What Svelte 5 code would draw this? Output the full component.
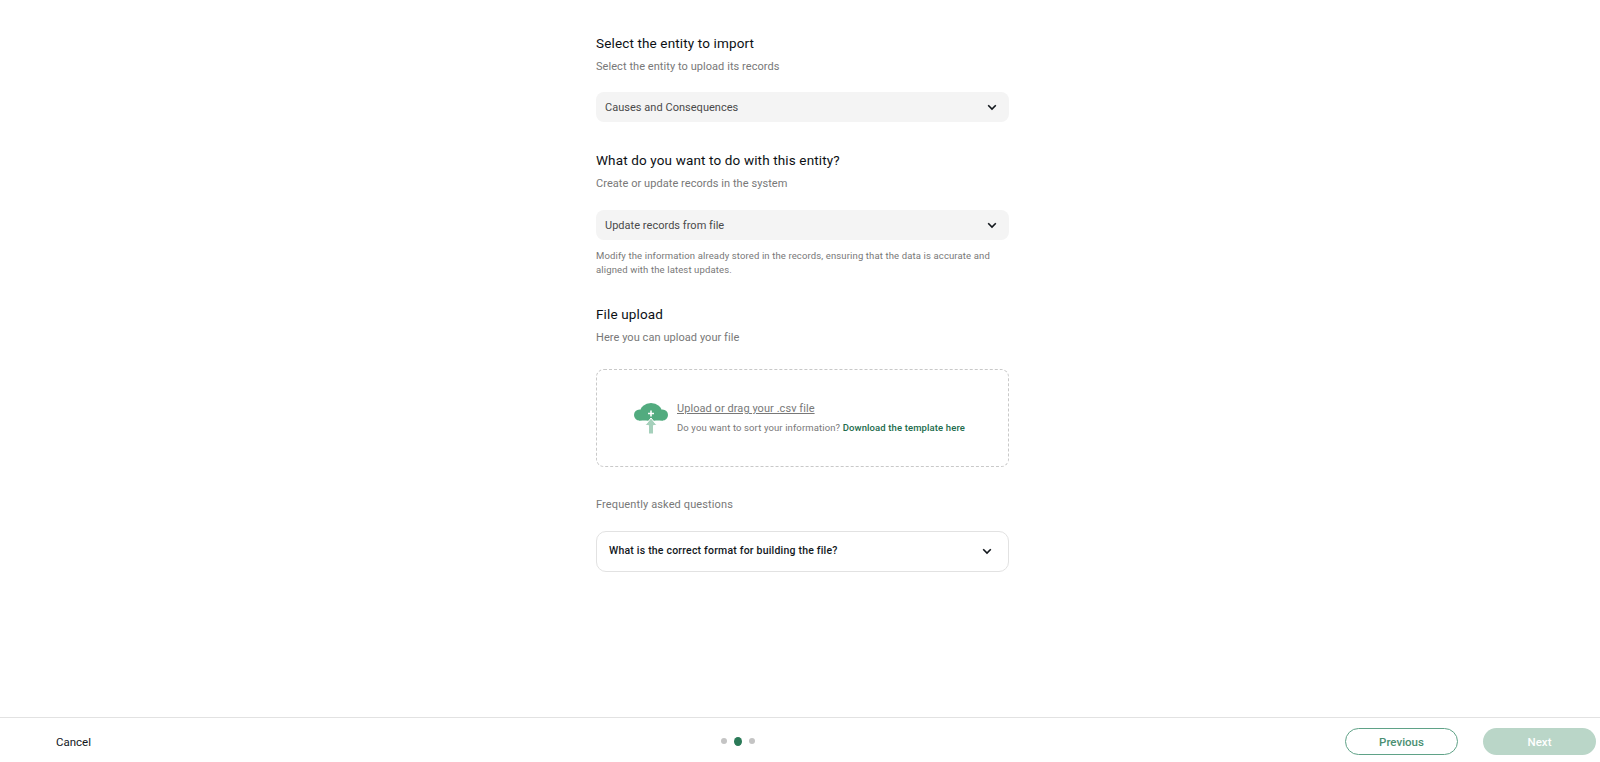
<script>
  const dots = [false, true, false];
</script>

<div class="page">
  <main class="content">
    <section class="block">
      <h2>Select the entity to import</h2>
      <p class="sub">Select the entity to upload its records</p>
      <div class="select">
        <span>Causes and Consequences</span>
        <svg class="chev" viewBox="0 0 12 12" width="12" height="12"><path d="M2.2 4.2 6 8l3.8-3.8" fill="none" stroke="currentColor" stroke-width="1.6"/></svg>
      </div>
    </section>

    <section class="block second">
      <h2>What do you want to do with this entity?</h2>
      <p class="sub">Create or update records in the system</p>
      <div class="select">
        <span>Update records from file</span>
        <svg class="chev" viewBox="0 0 12 12" width="12" height="12"><path d="M2.2 4.2 6 8l3.8-3.8" fill="none" stroke="currentColor" stroke-width="1.6"/></svg>
      </div>
      <p class="help">Modify the information already stored in the records, ensuring that the data is accurate and aligned with the latest updates.</p>
    </section>

    <section class="block third">
      <h2>File upload</h2>
      <p class="sub">Here you can upload your file</p>
      <div class="drop">
        <svg class="cloud" viewBox="0 0 34 31" width="34" height="31">
          <g fill="#52ab7f">
            <circle cx="5.500" cy="12" r="5.500"/>
            <ellipse cx="17" cy="9" rx="11" ry="9"/>
            <circle cx="28.500" cy="12" r="5.500"/>
            <rect x="5" y="10" width="24" height="7.500"/>
          </g>
          <path d="M17 15 11 22.500h3.500V31h5v-8.500H23z" fill="#a5d0bb" stroke="#fff" stroke-width="1"/>
          <path d="M17 7.500v6M14 10.500h6" stroke="#fff" stroke-width="1.600" fill="none"/>
        </svg>
        <div class="drop-text">
          <span class="upload">Upload or drag your .csv file</span>
          <span class="hint">Do you want to sort your information? <b>Download the template here</b></span>
        </div>
      </div>
    </section>

    <p class="faq-title">Frequently asked questions</p>
    <div class="faq">
      <span>What is the correct format for building the file?</span>
      <svg class="chev" viewBox="0 0 12 12" width="12" height="12"><path d="M2.2 4.2 6 8l3.8-3.800" fill="none" stroke="currentColor" stroke-width="1.600"/></svg>
    </div>
  </main>

  <footer class="footer">
    <span class="cancel">Cancel</span>
    <div class="dots">
      {#each dots as on}
        <span class="dot" class:on></span>
      {/each}
    </div>
    <div class="actions">
      <button class="btn prev">Previous</button>
      <button class="btn next">Next</button>
    </div>
  </footer>
</div>

<style>
  :global(body) { margin: 0; background: #fff; }
  .page {
    height: 100vh; display: flex; flex-direction: column;
    font-family: Roboto, "Liberation Sans", sans-serif; color: #12171c;
  }
  .content {
    flex: 1; width: 413px; margin-left: calc(50% - 204px); padding-top: 34px;
    box-sizing: border-box;
  }
  h2 { margin: 0; font-size: 13.500px; font-weight: 400; line-height: 18px; letter-spacing: .14px; color: #0c1014; }
  .sub { margin: 6px 0 0; font-size: 11px; line-height: 17px; color: #787878; letter-spacing: .06px; }
  .select {
    margin-top: 17px; height: 30px; border-radius: 8px; background: #f4f4f4;
    display: flex; align-items: center; justify-content: space-between;
    padding: 0 11px 0 9px; font-size: 11px; color: #4a4a4a; letter-spacing: .03px;
  }
  .chev { color: #12171c; flex: none; }
  .second { margin-top: 29px; }
  .second .select { margin-top: 18px; }
  .help { margin: 9px 0 0; font-size: 9.500px; line-height: 14px; color: #787878; letter-spacing: .13px; }
  .third { margin-top: 28px; }
  .drop {
    margin-top: 23px; height: 98px; box-sizing: border-box;
    border: 1px dashed #c9c9c9; border-radius: 8px;
    display: flex; align-items: center; padding-left: 37px; gap: 9px;
  }
  .cloud { flex: none; }
  .drop-text { display: flex; flex-direction: column; gap: 6px; }
  .upload { font-size: 11px; line-height: 13px; color: #787878; text-decoration: underline; letter-spacing: .06px; }
  .hint { font-size: 9.500px; line-height: 13px; color: #787878; letter-spacing: .12px; }
  .hint b { font-weight: 500; color: #216b4b; }
  .faq-title { margin: 31px 0 0; font-size: 11px; line-height: 14px; color: #787878; letter-spacing: .12px; }
  .faq {
    margin-top: 19px; height: 41px; box-sizing: border-box;
    border: 1px solid #e2e2e2; border-radius: 10px;
    display: flex; align-items: center; justify-content: space-between;
    padding: 0 15px 2px 12px; font-size: 10.500px; font-weight: 500; letter-spacing: .2px;
  }
  .footer {
    height: 41px; flex: none; border-top: 1px solid #e2e2e2;
    display: grid; grid-template-columns: 665px auto 1fr; align-items: center;
    padding: 3px 4px 0 56px;
  }
  .cancel { font-size: 11.500px; }
  .dots { display: flex; align-items: center; gap: 7px; margin-bottom: 1px; }
  .dot { width: 6px; height: 6px; border-radius: 50%; background: #c4c4c4; }
  .dot.on { width: 8px; height: 9px; background: #2b7a58; }
  .actions { display: flex; justify-content: flex-end; gap: 25px; }
  .btn {
    width: 113px; height: 27px; border-radius: 14px; box-sizing: border-box;
    font: 500 11.500px Roboto, sans-serif; padding: 0;
  }
  .prev { background: #fff; border: 1px solid #5fa287; color: #4a8f72; }
  .next { background: #bad6c8; border: 0; color: #fff; }
</style>
